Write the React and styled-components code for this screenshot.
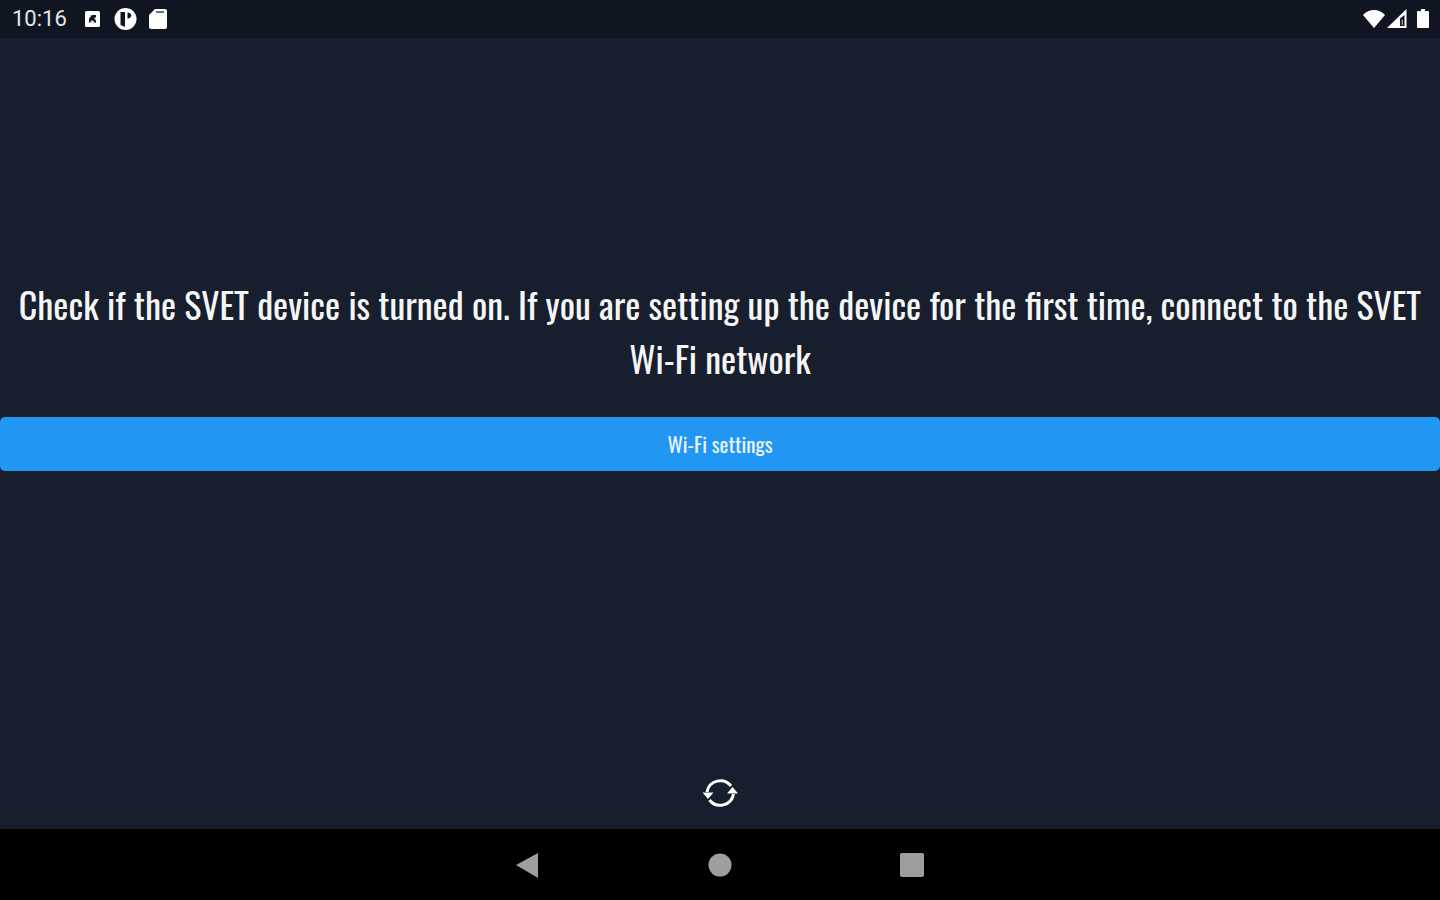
import styled, { createGlobalStyle } from "styled-components";

const GlobalStyle = createGlobalStyle`
	* {
		box-sizing: border-box;
	}

	body {
		margin: 0;
		background: #171f2f;
	}
`;

const StyledScreen = styled.div`
	min-height: 100vh;
	display: flex;
	flex-direction: column;
	background: #171f2f;
	color: #f5f5f5;
	font-family: Oswald, "Liberation Sans Narrow", "Liberation Sans", sans-serif;
`;

const StyledStatusBar = styled.header`
	height: 38px;
	padding: 0 10px 0 12px;
	display: flex;
	justify-content: space-between;
	align-items: center;
	background: #101621;
	font-family: Roboto, sans-serif;
	font-size: 22px;
	line-height: 24px;
`;

const StyledGroup = styled.div`
	display: flex;
	align-items: center;
	gap: ${({ $gap }) => $gap}px;

	svg {
		display: block;
	}
`;

const StyledTime = styled.time`
	margin-right: 6px;
	color: #e4e6e9;
`;

const StyledContent = styled.main`
	flex: 1;
	display: flex;
	flex-direction: column;
	justify-content: center;
	gap: 32px;
	padding-bottom: 48px;
`;

const StyledMessage = styled.p`
	margin: 0;
	padding: 0 12px;
	font-size: 36px;
	line-height: 54px;
	text-align: center;
`;

const StyledButton = styled.button`
	width: 100%;
	height: 54px;
	border: none;
	border-radius: 5px;
	background: #2196f3;
	color: #e9f4fe;
	font-family: inherit;
	font-size: 21px;
	line-height: 30px;
	cursor: pointer;
`;

const StyledFooter = styled.footer`
	height: 72px;
	display: flex;
	justify-content: center;
	align-items: center;
`;

const StyledIconButton = styled.button`
	display: flex;
	padding: 0;
	border: none;
	background: none;
	color: ${({ $color }) => $color};
	cursor: pointer;
`;

const StyledNavBar = styled.nav`
	height: 71px;
	display: flex;
	justify-content: center;
	align-items: center;
	gap: 152px;
	background: #000;
`;

const AppIcon = () => (
	<svg width="18" height="22" viewBox="0 0 18 22">
		<rect x="1" y="3" width="15" height="16" rx="1.5" fill="#fff" />
		<path fill="#101621" d="M5 7h7v8H5z" />
		<path fill="#fff" d="M5 7h3l-3 4zM5 15l3-3 4 3zM10 10l2-1v4z" opacity=".8" />
	</svg>
);

const ParkingIcon = () => (
	<svg width="24" height="24" viewBox="0 0 24 24">
		<circle cx="12.5" cy="12" r="11" fill="#fff" />
		<path fill="#101621" d="M7.5 5H12v15l-4.500-2zM14.500 5.500c5 0 5 6 0 6z" />
	</svg>
);

const CardIcon = () => (
	<svg width="20" height="24" viewBox="0 0 20 24">
		<path
			fill="#fff"
			d="M7 2h10a2 2 0 0 1 2 2v16a2 2 0 0 1-2 2H3a2 2 0 0 1-2-2V8z"
		/>
		<path stroke="#101621" strokeWidth="1.5" d="M8 5h8" opacity=".8" />
	</svg>
);

const WifiIcon = () => (
	<svg width="24" height="20" viewBox="0 0 24 20">
		<path fill="#fff" d="M1 6C4 2.500 8 1 12 1s8 1.500 11 5L12 19z" />
	</svg>
);

const SignalIcon = () => (
	<svg width="28" height="20" viewBox="0 0 28 20">
		<path fill="#fff" d="M19.500 0v19H0z" />
		<path fill="#101621" d="M13 9.500 17.500 6v11H13z" />
		<path fill="#8d929a" d="M14.500 10.500H16V16h-1.500z" />
	</svg>
);

const BatteryIcon = () => (
	<svg width="14" height="22" viewBox="0 0 14 22">
		<path
			fill="#fff"
			d="M5 1h4v2h3a1 1 0 0 1 1 1v15a1 1 0 0 1-1 1H2a1 1 0 0 1-1-1V4a1 1 0 0 1 1-1h3z"
		/>
	</svg>
);

const SyncIcon = () => (
	<svg width="36" height="36" viewBox="0 0 36 36">
		<g fill="none" stroke="currentColor" strokeWidth="3">
			<path d="M5 17a13.500 13.500 0 0 1 24-6" />
			<path d="M31.500 19a13.500 13.500 0 0 1-24 6" />
		</g>
		<path fill="currentColor" d="M.5 17.500h11L6 24zM25 18.500h11L30.500 12z" />
	</svg>
);

const App = () => {
	return (
		<StyledScreen>
			<GlobalStyle />
			<StyledStatusBar>
				<StyledGroup $gap={11}>
					<StyledTime>10:16</StyledTime>
					<AppIcon />
					<ParkingIcon />
					<CardIcon />
				</StyledGroup>
				<StyledGroup $gap={1}>
					<WifiIcon />
					<SignalIcon />
					<BatteryIcon />
				</StyledGroup>
			</StyledStatusBar>
			<StyledContent>
				<StyledMessage>
					Check if the SVET device is turned on. If you are setting up the device
					for the first time, connect to the SVET Wi-Fi network
				</StyledMessage>
				<StyledButton type="button">Wi-Fi settings</StyledButton>
			</StyledContent>
			<StyledFooter>
				<StyledIconButton type="button" aria-label="Refresh" $color="#fff">
					<SyncIcon />
				</StyledIconButton>
			</StyledFooter>
			<StyledNavBar>
				<StyledIconButton type="button" aria-label="Back" $color="#9e9e9e">
					<svg width="40" height="40" viewBox="0 0 40 40">
						<path fill="currentColor" d="M8 20 30 8v25z" />
					</svg>
				</StyledIconButton>
				<StyledIconButton type="button" aria-label="Home" $color="#9e9e9e">
					<svg width="40" height="40" viewBox="0 0 40 40">
						<circle cx="20" cy="20" r="11.5" fill="currentColor" />
					</svg>
				</StyledIconButton>
				<StyledIconButton type="button" aria-label="Overview" $color="#9e9e9e">
					<svg width="40" height="40" viewBox="0 0 40 40">
						<rect x="8" y="8" width="24" height="24" rx="2" fill="currentColor" />
					</svg>
				</StyledIconButton>
			</StyledNavBar>
		</StyledScreen>
	);
};

export default App;
